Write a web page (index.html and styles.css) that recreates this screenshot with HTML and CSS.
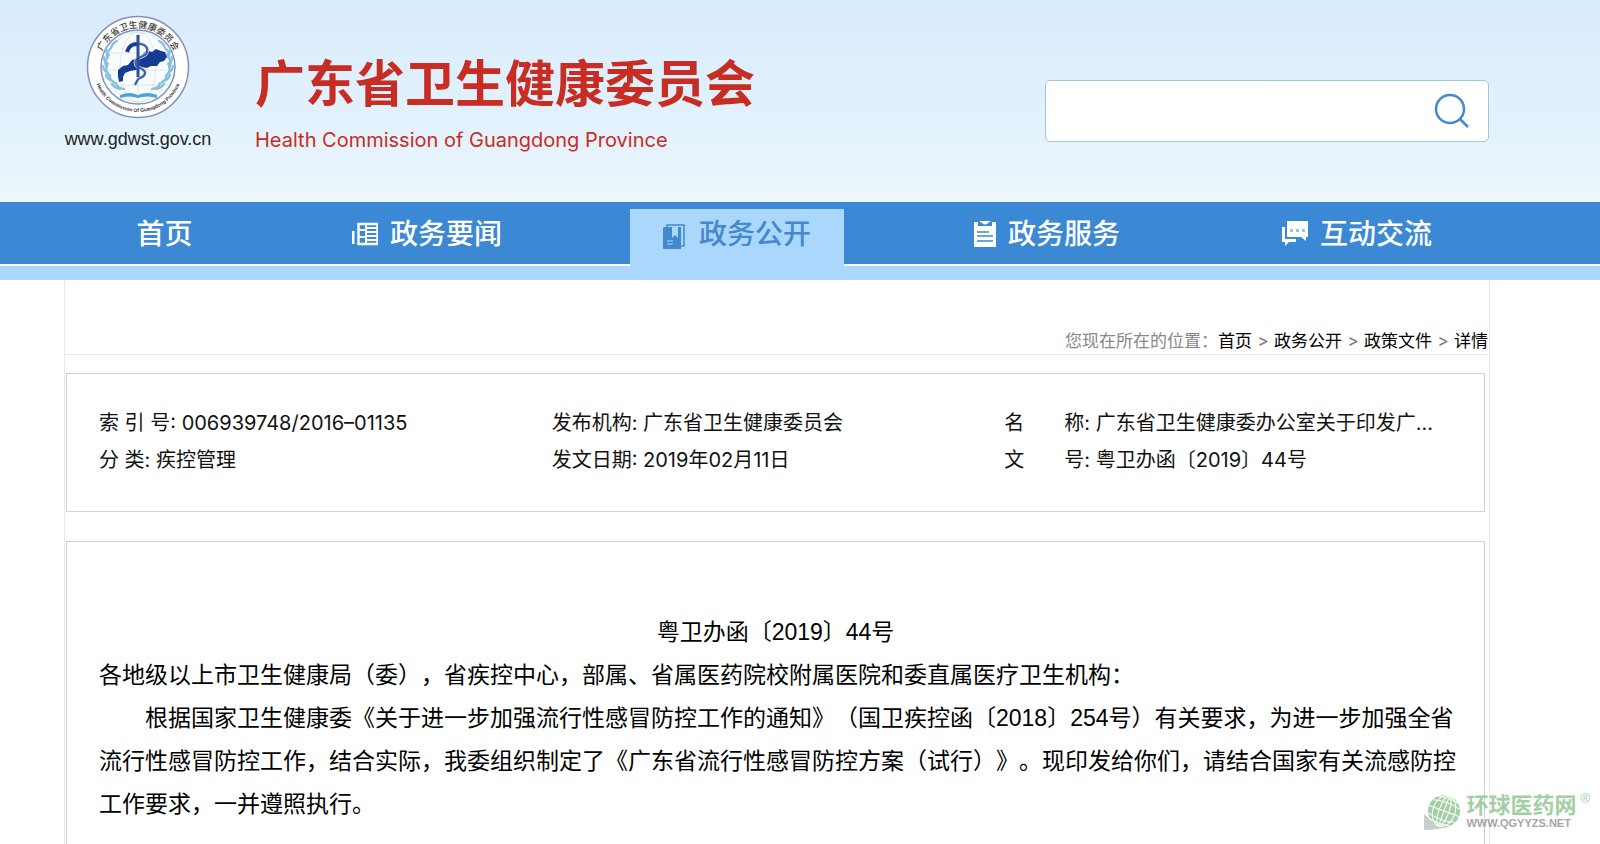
FILE: index.html
```html
<!DOCTYPE html>
<html lang="zh-CN">
<head>
<meta charset="utf-8">
<title>广东省卫生健康委员会</title>
<link rel="stylesheet" href="styles.css">
</head>
<body>
<header class="header">
  <div class="brand">
    <svg class="emblem" viewBox="0 0 104 104" aria-hidden="true">
      <defs>
        <path id="arc-top" d="M13 52a39 39 0 0 1 78 0"/>
        <path id="arc-bottom" d="M7 52a45 45 0 0 0 90 0"/>
      </defs>
      <circle cx="52" cy="52" r="50.500" fill="#fff" stroke="#8191bd" stroke-width="1.500"/>
      <circle cx="52" cy="52" r="37" fill="#f8fcfe" stroke="#8093bd" stroke-width="1.500"/>
      <g fill="none" stroke="#d5e3ea" stroke-width=".8">
        <path d="M52 16v71M20 38h64M16 55h72M22 70h60"/>
        <ellipse cx="52" cy="52" rx="18" ry="35"/>
        <ellipse cx="52" cy="52" rx="31" ry="35"/>
      </g>
      <g fill="none" stroke="#86bedd" stroke-width="2.200" stroke-linecap="round">
        <path d="M31 26q-5 2-6 7M25 33q-5 4-4 9M22 42q-4 4-2 9M21 51q-2 5 2 9M24 60q-1 5 5 8M30 68q1 5 8 6"/>
        <path d="M20 33q-1 5 3 7M18 42q0 5 4 7M17 51q1 5 5 7M20 60q2 5 7 6M26 69q3 4 8 5"/>
        <path d="M73 26q5 2 6 7M79 33q5 4 4 9M82 42q4 4 2 9M83 51q2 5-2 9M80 60q1 5-5 8M74 68q-1 5-8 6"/>
        <path d="M84 33q1 5-3 7M86 42q0 5-4 7M87 51q-1 5-5 7M84 60q-2 5-7 6M78 69q-3 4-8 5"/>
      </g>
      <path d="M34 80q9-4 18 0q9-4 19 0v3q-10-3-19 0q-9-3-18 0z" fill="#4ba5d6"/>
      <path d="M32 55l5-4 5-1 4-5 6-2 7-6 4-1 3 1 4-3 5 2 4 1 2 5-3 4-4 1-3 4-6 0-4 2-6-1-5 3-6 1-5 2-2 4 0 4-4 1-1-6z" fill="#143c94"/>
      <path d="M41 36c3-7 11-9 17-6c5 3 4 9-1 11s-9 4-7 9c2 4 9 3 9 8s-7 4-8 8l-2 4" fill="none" stroke="#dfe8f4" stroke-width="3.600"/>
      <path d="M41 36c3-7 11-9 17-6c5 3 4 9-1 11s-9 4-7 9c2 4 9 3 9 8s-7 4-8 8l-2 4" fill="none" stroke="#3f62a6" stroke-width="2.200"/>
      <path d="M41 37c2-7 6-8 11-8" fill="none" stroke="#143c94" stroke-width="4"/>
      <path d="M52 20v42" stroke="#2c4f9a" stroke-width="3"/>
      <text class="seal-cn"><textPath href="#arc-top" startOffset="50%" text-anchor="middle">广东省卫生健康委员会</textPath></text>
      <text class="seal-en"><textPath href="#arc-bottom" startOffset="50%" text-anchor="middle">Health Commission Of Guangdong Province</textPath></text>
    </svg>
    <span class="domain">www.gdwst.gov.cn</span>
  </div>
  <div class="titles">
    <h1 class="site-name">广东省卫生健康委员会</h1>
    <p class="site-name-en">Health Commission of Guangdong Province</p>
  </div>
  <form class="search">
    <input class="search-input" type="text" aria-label="搜索">
    <button class="search-button" type="button" aria-label="搜索">
      <svg width="36" height="36" viewBox="0 0 36 36" fill="none" stroke="#4489cb" stroke-width="2.500"><circle cx="16" cy="16" r="14"/><path d="M26 26l8 8"/></svg>
    </button>
  </form>
</header>

<nav class="nav">
  <a class="nav-item" href="#">首页</a>
  <a class="nav-item" href="#">
    <svg class="nav-icon" viewBox="0 0 26 26"><path d="M0 10h2.500v13H0z" fill="currentColor"/><path d="M6.500 3h19v20h-19z" fill="none" stroke="currentColor" stroke-width="2.400"/><path d="M14 3v20M7 9h6M7 16h6M14 7h12M14 11h12M14 15h12M14 19h12" fill="none" stroke="currentColor" stroke-width="2"/></svg>
    政务要闻
  </a>
  <a class="nav-item active" href="#">
    <span class="nav-tab">
    <svg class="nav-icon narrow" viewBox="0 0 22 26"><path d="M4 3V1h17v21h-3" fill="none" stroke="currentColor" stroke-width="1.500"/><path d="M1 3h8v11l3-3 3 3V3h3v22H1q-1 0-1-1V4z" fill="currentColor"/><path d="M4 17h6M4 20h6" stroke="#aad7fb" stroke-width="1.200"/></svg>
    政务公开
    </span>
  </a>
  <a class="nav-item" href="#">
    <svg class="nav-icon narrow" viewBox="0 0 22 26"><path d="M0 1h4v4h14V1h4v25H0z" fill="currentColor"/><path d="M5 0h12l-3 2q-3 3-6 0z" fill="currentColor"/><path d="M3 11h12M3 15h16M3 20h16" stroke="#3b89d4" stroke-width="1.400"/></svg>
    政务服务
  </a>
  <a class="nav-item" href="#">
    <svg class="nav-icon" viewBox="0 0 26 26"><path d="M5 0h21v16h-2v4l-5-4H5z" fill="currentColor"/><path d="M0 6h3v12h11v3H7l-4 4v-4H0z" fill="currentColor"/><path d="M8 8h3v3H8zM14 8h3v3h-3zM20 8h3v3h-3z" fill="#9bc5ec"/></svg>
    互动交流
  </a>
</nav>

<main class="page">
  <div class="breadcrumb">
    <span class="crumb-label">您现在所在的位置：</span><a href="#">首页</a><span class="sep">&gt;</span><a href="#">政务公开</a><span class="sep">&gt;</span><a href="#">政策文件</a><span class="sep">&gt;</span><a href="#">详情</a>
  </div>
  <section class="meta">
    <div>索 引 号: 006939748/2016–01135</div>
    <div>发布机构: 广东省卫生健康委员会</div>
    <div>名&emsp;&emsp;称: 广东省卫生健康委办公室关于印发广…</div>
    <div>分 类: 疾控管理</div>
    <div>发文日期: 2019年02月11日</div>
    <div>文&emsp;&emsp;号: 粤卫办函〔2019〕44号</div>
  </section>
  <article class="article">
    <p class="doc-number">粤卫办函〔2019〕44号</p>
    <p class="text">各地级以上市卫生健康局（委），省疾控中心，部属、省属医药院校附属医院和委直属医疗卫生机构：</p>
    <p class="text indent">根据国家卫生健康委《关于进一步加强流行性感冒防控工作的通知》（国卫疾控函〔2018〕254号）有关要求，为进一步加强全省流行性感冒防控工作，结合实际，我委组织制定了《广东省流行性感冒防控方案（试行）》。现印发给你们，请结合国家有关流感防控工作要求，一并遵照执行。</p>
  </article>
</main>

<div class="watermark">
  <svg class="globe" width="40" height="40" viewBox="0 0 40 40" aria-hidden="true">
    <path d="M0 22q12 13 27 12q-12 4-27 4z" fill="#c9cfc9"/>
    <g transform="rotate(20 20 19)">
      <circle cx="20" cy="19" r="16" fill="#a2cfa4"/>
      <g fill="none" stroke="#fff" stroke-width="1"><ellipse cx="20" cy="19" rx="5" ry="16"/><ellipse cx="20" cy="19" rx="11" ry="16"/><path d="M20 3v32M4 19h32M6 12q14-4 28 0M9 7q11-3 22 0M6 26q14 4 28 0M9 31q11 3 22 0"/></g>
    </g>
  </svg>
  <div class="wm-text"><span class="wm-name">环球医药网</span><span class="wm-url">WWW.QGYYZS.NET</span></div>
  <span class="wm-reg">®</span>
</div>
</body>
</html>
```
FILE: styles.css
```css
* { box-sizing: border-box; }
html, body { height: 100%; }
body {
  margin: 0;
  display: flex;
  flex-direction: column;
  overflow: hidden;
  background: #fff;
  color: #111;
  font-family: Inter, "Noto Sans CJK SC", sans-serif;
  text-spacing-trim: space-all;
}
h1, p { margin: 0; }
a { color: inherit; text-decoration: none; }

.header {
  flex: none;
  height: 202px;
  padding: 15px 111px 0 64px;
  display: flex;
  align-items: flex-start;
  background: linear-gradient(#d9ecfc, #e2f1fd 60%, #edf7fc);
}
.brand { width: 148px; display: flex; flex-direction: column; align-items: center; }
.emblem { width: 104px; height: 104px; }
.seal-cn { font: 500 9px "Noto Sans CJK SC", sans-serif; fill: #444; }
.seal-en { font: bold 5px "Liberation Sans", sans-serif; fill: #333; }
.domain { font: 18px/24px "Liberation Sans", sans-serif; color: #222; margin-top: 8px; }
.titles { margin: 39px 0 0 43px; color: #c82d24; }
.site-name { font-size: 50px; line-height: 60px; font-weight: 700; white-space: nowrap; }
.site-name-en { font-size: 20px; line-height: 28px; margin-top: 12px; white-space: nowrap; }
.search {
  width: 444px;
  height: 62px;
  margin: 65px 0 0 auto;
  display: flex;
  align-items: center;
  background: #fff;
  border: 1px solid #a9c5d8;
  border-radius: 5px;
}
.search-input { flex: 1; min-width: 0; height: 100%; padding: 0 16px; border: 0; outline: 0; background: transparent; font-size: 20px; }
.search-button { padding: 0; margin-right: 18px; border: 0; background: none; display: flex; }

.nav {
  flex: none;
  height: 78px;
  padding: 0 88px 14px 57px;
  display: grid;
  grid-template-columns: 215fr 310fr 310fr 310fr 310fr;
  background: linear-gradient(#3b89d4 62px, #fff 62px, #fff 64px, #aad7fb 64px);
  color: #fff;
  font-size: 28px;
  line-height: 40px;
  font-weight: 500;
}
.nav-item { display: flex; align-items: center; justify-content: center; gap: 12px; white-space: nowrap; }
.nav-item.active { align-items: flex-end; }
.nav-tab {
  display: flex;
  align-items: flex-end;
  justify-content: center;
  gap: 14px;
  width: 214px;
  height: 57px;
  padding-bottom: 12px;
  background: #aad7fb;
  color: #4389d0;
}
.nav-icon { width: 26px; height: 26px; }
.nav-icon.narrow { width: 22px; }
.nav-tab .nav-icon { margin-bottom: 4px; }

.page {
  flex: 1;
  margin: 0 110px 0 64px;
  border: 1px solid #dcebf7;
  border-width: 0 1px;
  display: flex;
  flex-direction: column;
}
.breadcrumb {
  height: 75px;
  padding: 49px 1px 0 0;
  border-bottom: 1px solid #e8ecef;
  display: flex;
  justify-content: flex-end;
  font-size: 17px;
  line-height: 25px;
  color: #000;
}
.crumb-label { color: #888; }
.sep { width: 22px; text-align: center; color: #777; }
.meta {
  margin: 18px 4px 29px 1px;
  height: 139px;
  padding: 31px 27px 0 32px;
  border: 1px solid #ccd2d8;
  display: grid;
  grid-template-columns: 453fr 453fr 453fr;
  grid-auto-rows: 37px;
  font-size: 20px;
  line-height: 37px;
  white-space: nowrap;
}
.article {
  flex: 1;
  margin: 0 4px 0 1px;
  padding-top: 69px;
  border: 1px solid #ccd2d8;
  border-bottom: 0;
  font-family: "Liberation Sans", "Noto Sans CJK SC", sans-serif;
  font-size: 23px;
  line-height: 43px;
  color: #000;
}
.doc-number { text-align: center; }
.text { padding: 0 26px 0 32px; }
.indent { text-indent: 2em; }

.watermark { position: absolute; right: 10px; bottom: 12px; display: flex; align-items: flex-start; }
.wm-text { display: flex; flex-direction: column; padding: 1px 4px 0 2px; }
.wm-name { font-size: 22px; line-height: 24px; font-weight: 700; color: #a2cfa4; }
.wm-url { font: bold 11px/12px "Liberation Sans", sans-serif; color: #a5a5a5; }
.wm-reg { font: 13px/14px "Liberation Sans", sans-serif; color: #a2cfa4; }
```
